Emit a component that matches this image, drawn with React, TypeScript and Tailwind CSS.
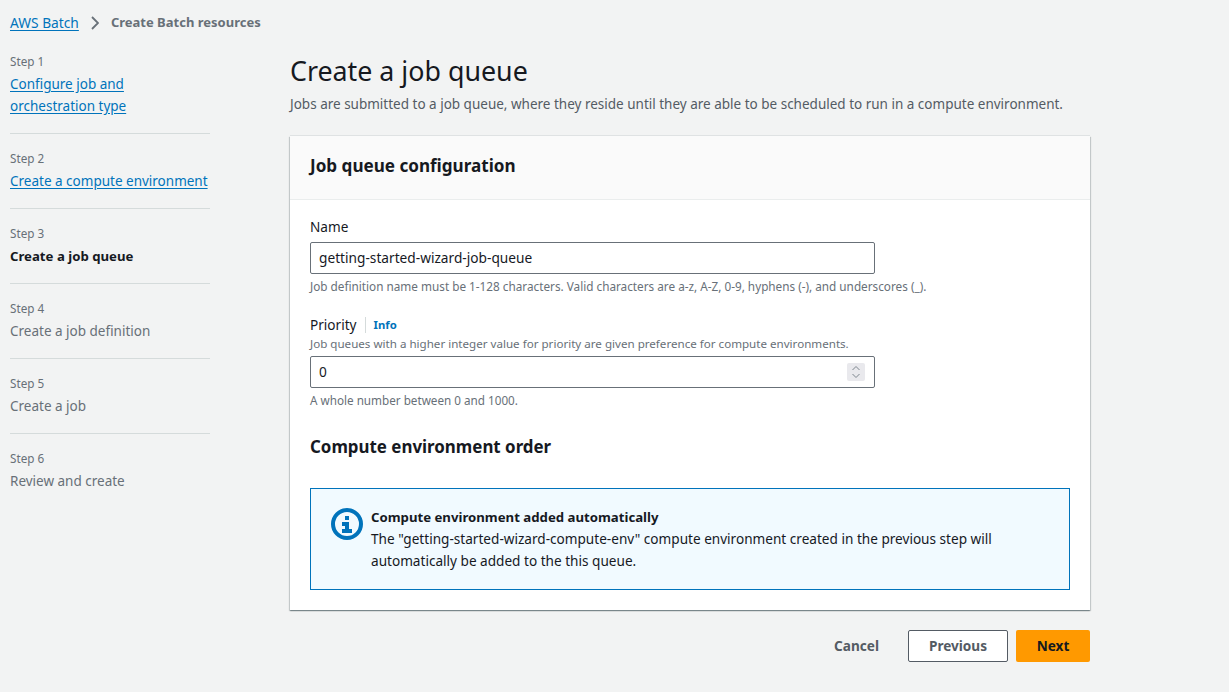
import React from 'react';

const font = "font-['Noto_Sans','Open_Sans',sans-serif]";

const steps = [
  { n: 1, lines: ['Configure job and', 'orchestration type'], state: 'link' },
  { n: 2, lines: ['Create a compute environment'], state: 'link' },
  { n: 3, lines: ['Create a job queue'], state: 'current' },
  { n: 4, lines: ['Create a job definition'], state: 'off' },
  { n: 5, lines: ['Create a job'], state: 'off' },
  { n: 6, lines: ['Review and create'], state: 'off' },
];

function Sidebar() {
  return (
    <nav className="w-[200px] shrink-0 pt-[7px]">
      {steps.map((s, i) => (
        <div key={s.n} className={i > 0 ? 'mt-[16px] border-t border-[#d5dbdb] pt-[16px]' : ''}>
          <div className="text-[11.7px] leading-[16px] text-[#687078]">Step {s.n}</div>
          <div className="mt-[4px] text-[13.5px] leading-[22px]">
            {s.lines.map((l) => (
              <div key={l}>
                {s.state === 'link' && <a className="text-[#0073bb] underline underline-offset-2">{l}</a>}
                {s.state === 'current' && <span className="text-[13.2px] font-bold text-[#16191f]">{l}</span>}
                {s.state === 'off' && <span className="text-[#687078]">{l}</span>}
              </div>
            ))}
          </div>
        </div>
      ))}
    </nav>
  );
}

function InfoIcon() {
  return (
    <svg width="32" height="32" viewBox="0 0 32 32" className="mt-[2px] shrink-0">
      <circle cx="16" cy="16" r="14" fill="none" stroke="#0073bb" strokeWidth="4" />
      <rect x="14" y="8" width="4" height="4" fill="#0073bb" />
      <path d="M11 14h7v7h3v4H11v-4h3v-3h-3z" fill="#0073bb" />
    </svg>
  );
}

function Spinner() {
  return (
    <div className="flex h-[18px] w-[18px] items-center justify-center rounded-[2px] bg-[#e9e9ed]">
      <svg width="10" height="14" viewBox="0 0 10 14" fill="none" stroke="#7d868e" strokeWidth="1">
        <path d="M1.5 5l3.5-3.5 3.5 3.5M1.5 9l3.5 3.5 3.5-3.5" />
      </svg>
    </div>
  );
}

export default function App() {
  return (
    <div className={`${font} h-[692px] w-full overflow-hidden bg-[#f2f3f3] text-[#16191f]`}>
      <div className="flex h-[46px] items-center pl-[10px] text-[13.75px]">
        <a className="text-[#0073bb] underline underline-offset-2">AWS Batch</a>
        <svg width="8" height="14" viewBox="0 0 8 14" fill="none" stroke="#687078" strokeWidth="1.8" className="mx-[12px]">
          <path d="M1 1l6 6-6 6" />
        </svg>
        <span className="text-[13px] font-bold text-[#687078]">Create Batch resources</span>
      </div>

      <div className="flex pl-[10px]">
        <Sidebar />
        <main className="ml-[80px] w-[800px]">
          <h1 className="mt-[7px] text-[26.8px] leading-[36px] font-normal">Create a job queue</h1>
          <p className="mt-[4px] text-[13.5px] leading-[22px] text-[#545b64]">
            Jobs are submitted to a job queue, where they reside until they are able to be scheduled to run in a compute environment.
          </p>

          <section className="mt-[21px] bg-white shadow-[0_1px_1px_0_rgba(0,28,36,0.3),1px_1px_1px_0_rgba(0,28,36,0.15),-1px_1px_1px_0_rgba(0,28,36,0.15),0_-1px_0_0_rgba(0,28,36,0.08)]">
            <div className="flex h-[64px] items-center border-b border-[#eaeded] bg-[#fafafa] px-[20px] pb-[3px]">
              <h2 className="text-[17.1px] leading-[22px] font-bold">Job queue configuration</h2>
            </div>
            <div className="px-[20px] pt-[16px] pb-[20px]">
              <div className="text-[13.6px] leading-[22px]">Name</div>
              <div className="mt-[4px] flex h-[32px] w-[565px] items-center rounded-[2px] border border-[#687078] bg-white px-[8px] text-[13.7px]">
                getting-started-wizard-job-queue
              </div>
              <div className="mt-[4px] text-[11.75px] leading-[16px] text-[#687078]">
                Job definition name must be 1-128 characters. Valid characters are a-z, A-Z, 0-9, hyphens (-), and underscores (_).
              </div>

              <div className="mt-[20px] flex items-center text-[13.6px] leading-[22px]">
                <span>Priority</span>
                <span className="ml-[8px] h-[16px] border-l border-[#d5dbdb]" />
                <a className="ml-[8px] text-[11.3px] font-bold text-[#0073bb]">Info</a>
              </div>
              <div className="text-[11.6px] leading-[16px] text-[#687078]">
                Job queues with a higher integer value for priority are given preference for compute environments.
              </div>
              <div className="mt-[4px] flex h-[32px] w-[565px] items-center justify-between rounded-[2px] border border-[#687078] bg-white pr-[9px] pl-[8px] text-[13.7px]">
                <span>0</span>
                <Spinner />
              </div>
              <div className="mt-[4px] text-[11.7px] leading-[16px] text-[#687078]">A whole number between 0 and 1000.</div>

              <h2 className="mt-[28px] text-[16.9px] leading-[22px] font-bold">Compute environment order</h2>

              <div className="mt-[30px] flex h-[102px] gap-[8px] border border-[#0073bb] bg-[#f1faff] pt-[17px] pl-[20px]">
                <InfoIcon />
                <div className="text-[13.6px] leading-[22px]">
                  <div className="text-[13.2px] font-bold">Compute environment added automatically</div>
                  <div>The "getting-started-wizard-compute-env" compute environment created in the previous step will</div>
                  <div>automatically be added to the this queue.</div>
                </div>
              </div>
            </div>
          </section>

          <div className="mt-[20px] flex items-center justify-end text-[13.6px] font-bold">
            <button className="mr-[29px] text-[#545b64]">Cancel</button>
            <button className="h-[32px] w-[100px] rounded-[2px] border border-[#545b64] bg-white text-[#545b64]">Previous</button>
            <button className="ml-[8px] h-[32px] w-[74px] rounded-[2px] bg-[#ff9900] text-[#16191f]">Next</button>
          </div>
        </main>
      </div>
    </div>
  );
}
